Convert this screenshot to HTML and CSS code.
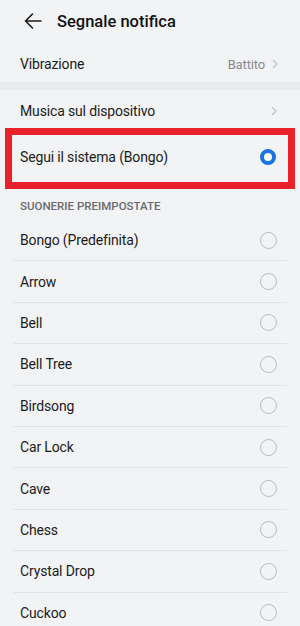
FILE: index.html
```html
<!DOCTYPE html>
<html lang="it">
<head>
<meta charset="utf-8">
<link rel="stylesheet" href="styles.css">
</head>
<body>
<div class="screen">
  <header class="topbar">
    <svg class="back" width="18" height="16" viewBox="0 0 18 16"><path d="M17 8H1.5M8.5 1L1.5 8l7 7" fill="none" stroke="#1a1a1a" stroke-width="1.6" stroke-linecap="round" stroke-linejoin="round"/></svg>
    <h1 class="title">Segnale notifica</h1>
  </header>
  <div class="row row-vib">
    <span class="label">Vibrazione</span>
    <span class="value">Battito<svg class="chev" width="6" height="10" viewBox="0 0 6 10"><path d="M1 1l4 4-4 4" fill="none" stroke="#c2c2c4" stroke-width="1.2"/></svg></span>
  </div>
  <div class="band"></div>
  <div class="row row-music">
    <span class="label">Musica sul dispositivo</span>
    <svg class="chev" width="6" height="10" viewBox="0 0 6 10"><path d="M1 1l4 4-4 4" fill="none" stroke="#c2c2c4" stroke-width="1.2"/></svg>
  </div>
  <div class="row row-system">
    <span class="label">Segui il sistema (Bongo)</span>
    <span class="radio on"></span>
    <div class="highlight"></div>
  </div>
  <div class="section">SUONERIE PREIMPOSTATE</div>
  <ul class="list">
    <li class="item"><span class="label">Bongo (Predefinita)</span><span class="radio"></span></li>
    <li class="item"><span class="label">Arrow</span><span class="radio"></span></li>
    <li class="item"><span class="label">Bell</span><span class="radio"></span></li>
    <li class="item"><span class="label">Bell Tree</span><span class="radio"></span></li>
    <li class="item"><span class="label">Birdsong</span><span class="radio"></span></li>
    <li class="item"><span class="label">Car Lock</span><span class="radio"></span></li>
    <li class="item"><span class="label">Cave</span><span class="radio"></span></li>
    <li class="item"><span class="label">Chess</span><span class="radio"></span></li>
    <li class="item"><span class="label">Crystal Drop</span><span class="radio"></span></li>
    <li class="item"><span class="label">Cuckoo</span><span class="radio"></span></li>
  </ul>
</div>
</body>
</html>
```

FILE: styles.css
```css
* { box-sizing: border-box; }
html, body {
  margin: 0;
  padding: 0;
  background: #f1f3f5;
}
body {
  font-family: Roboto, "Noto Sans", sans-serif;
  color: #1b1b1b;
  width: 300px;
  height: 626px;
  overflow: hidden;
}
.screen {
  display: flex;
  flex-direction: column;
}
.topbar {
  height: 42px;
  display: flex;
  align-items: center;
  padding-left: 24px;
  gap: 15px;
}
.back { display: block; }
.title {
  margin: 0;
  font-size: 16.5px;
  font-weight: 500;
  color: #111;
}
.row {
  display: flex;
  align-items: center;
  justify-content: space-between;
  padding: 0 22px 0 20px;
  font-size: 14px;
  letter-spacing: -0.15px;
}
.row-vib { height: 40px; padding-top: 4px; }
.band {
  height: 8px;
  background: #e9eaec;
}
.row-music { height: 42px; padding-right: 23px; }
.row-system {
  height: 50px;
  position: relative;
  padding-right: 24px;
}
.value {
  display: flex;
  align-items: center;
  gap: 7px;
  color: #8a8a8d;
  font-size: 13px;
}
.chev { display: block; }
.label { color: #1b1b1b; }
.section {
  height: 38px;
  padding: 17px 0 0 20px;
  font-size: 11.5px;
  line-height: 14px;
  font-weight: 500;
  color: #6b6b6e;
}
.list {
  list-style: none;
  margin: 0 13px 0 14px;
  padding: 0;
}
.item {
  height: 41.4px;
  display: flex;
  align-items: center;
  justify-content: space-between;
  padding: 0 10px 0 6px;
  font-size: 14px;
  letter-spacing: -0.15px;
  border-bottom: 1px solid #e1e2e4;
}
.radio {
  width: 17px;
  height: 17px;
  border-radius: 50%;
  border: 1.2px solid #b8b9bc;
  flex: none;
}
.radio.on {
  width: 16px;
  height: 16px;
  border: 4.5px solid #1a73e0;
  background: #fff;
}
.highlight {
  position: absolute;
  left: 5px;
  right: 5px;
  top: -4px;
  bottom: -7px;
  border: 7px solid #e8222b;
  pointer-events: none;
}
```
